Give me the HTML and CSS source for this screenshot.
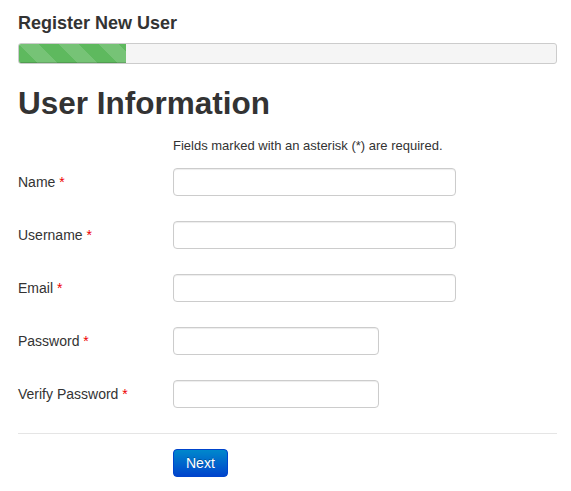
FILE: index.html
```html
<!DOCTYPE html>
<html>
<head>
  <title>Register New User</title>
  <link rel="stylesheet" href="styles.css">
</head>
<body>

  <div class="page">
    <h1 class="page-title">Register New User</h1>

    <div class="progress">
      <div class="bar" style="width: 20%;"></div>
    </div>

    <h2 class="section-title">User Information</h2>

    <form class="form-horizontal">
      <p class="hint">Fields marked with an asterisk (*) are required.</p>

      <div class="control-group">
        <label for="name">Name <span class="star">*</span></label>
        <input type="text" id="name" class="input-wide">
      </div>

      <div class="control-group">
        <label for="username">Username <span class="star">*</span></label>
        <input type="text" id="username" class="input-wide">
      </div>

      <div class="control-group">
        <label for="email">Email <span class="star">*</span></label>
        <input type="text" id="email" class="input-wide">
      </div>

      <div class="control-group">
        <label for="password">Password <span class="star">*</span></label>
        <input type="password" id="password" class="input-short">
      </div>

      <div class="control-group">
        <label for="password2">Verify Password <span class="star">*</span></label>
        <input type="password" id="password2" class="input-short">
      </div>

      <div class="form-actions">
        <button type="button" class="btn-primary">Next</button>
      </div>
    </form>
  </div>

</body>
</html>
```

FILE: styles.css
```css
body {
  margin: 0;
  font-family: "Liberation Sans", Arial, sans-serif;
  font-size: 14px;
  line-height: 20px;
  color: #333;
  background-color: #fff;
}
.page {
  padding: 0 14px 0 18px;
}
.page-title {
  margin: 12px 0 0;
  font-size: 18px;
  line-height: 22px;
  font-weight: bold;
}
.progress {
  margin-top: 9px;
  height: 19px;
  border: 1px solid #ccc;
  border-radius: 3px;
  background-color: #f5f5f5;
  overflow: hidden;
}
.bar {
  height: 100%;
  background-color: #5eb95e;
  background-image: linear-gradient(45deg,
    rgba(255, 255, 255, 0.15) 25%, transparent 25%,
    transparent 50%, rgba(255, 255, 255, 0.15) 50%,
    rgba(255, 255, 255, 0.15) 75%, transparent 75%);
  background-size: 40px 40px;
  box-shadow: inset 0 -1px 0 rgba(0, 0, 0, 0.15);
}
.section-title {
  margin: 19px 0 0;
  font-size: 31.5px;
  line-height: 40px;
  font-weight: bold;
}
.form-horizontal {
  margin: 0;
}
.hint {
  margin: 14px 0 13px 155px;
  font-size: 13px;
  line-height: 18px;
}
.control-group {
  display: flex;
  align-items: center;
  margin-bottom: 25px;
}
.control-group label {
  width: 155px;
  flex-shrink: 0;
}
.star {
  color: #e00;
}
.control-group input {
  box-sizing: border-box;
  height: 28px;
  padding: 4px 6px;
  border: 1px solid #ccc;
  border-radius: 4px;
  box-shadow: inset 0 1px 1px rgba(0, 0, 0, 0.075);
  font: inherit;
}
.input-wide {
  width: 283px;
}
.input-short {
  width: 206px;
}
.form-actions {
  border-top: 1px solid #e5e5e5;
  padding: 15px 0 0 155px;
}
.btn-primary {
  height: 28px;
  padding: 0 12px;
  font-family: inherit;
  font-size: 14px;
  color: #fff;
  text-shadow: 0 -1px 0 rgba(0, 0, 0, 0.25);
  background-color: #006dcc;
  background-image: linear-gradient(to bottom, #0088cc, #0044cc);
  border: 1px solid #04c;
  border-radius: 4px;
  cursor: pointer;
}
```
